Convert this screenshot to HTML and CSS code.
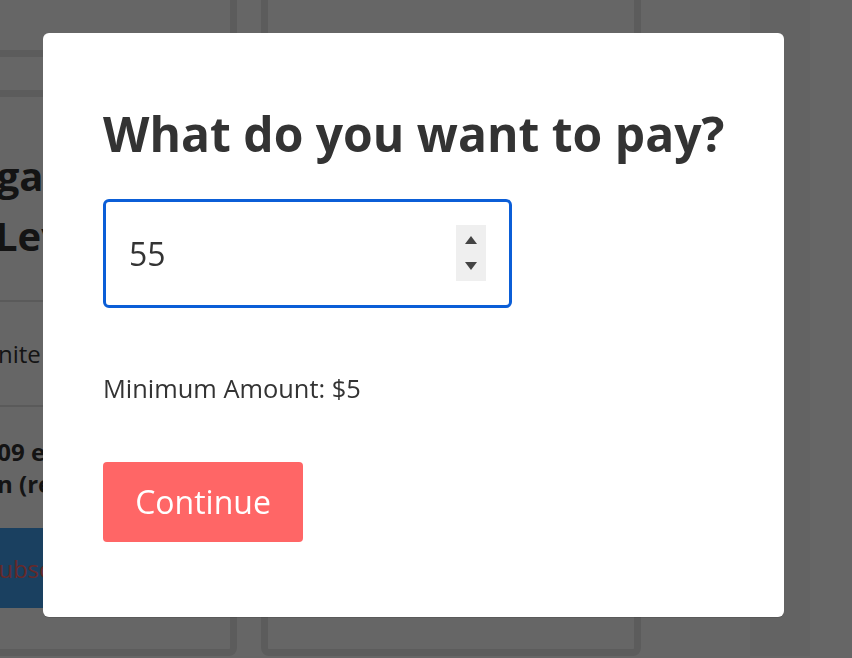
FILE: index.html
```html
<!DOCTYPE html>
<html lang="en">
<head>
<meta charset="utf-8">
<title>What do you want to pay?</title>
<link rel="stylesheet" href="styles.css">
</head>
<body>
<div class="page">
  <div class="card card-a">
    <div class="row row-top"></div>
    <div class="row row-mid"></div>
    <div class="plan">
      <h2 class="plan-name">Omega<br>Level</h2>
    </div>
    <div class="feature">Definite</div>
    <div class="price"><strong>$9.09 each<br>plan (renews)</strong></div>
    <div class="subscribe">Subscribe</div>
  </div>
  <div class="card card-b"></div>
  <div class="strip"></div>
</div>

<div class="overlay">
  <div class="modal">
    <h1 class="modal-title">What do you want to pay?</h1>
    <div class="amount">
      <span class="amount-value">55</span>
      <span class="spinner">
        <svg width="30" height="56" viewBox="0 0 30 56">
          <polygon points="9,19 15,11 21,19" fill="#444"/>
          <polygon points="9,37 21,37 15,45" fill="#444"/>
        </svg>
      </span>
    </div>
    <p class="minimum">Minimum Amount: $5</p>
    <button class="continue">Continue</button>
  </div>
</div>
</body>
</html>
```

FILE: styles.css
```css
html, body {
  margin: 0;
  padding: 0;
  width: 852px;
  height: 658px;
  overflow: hidden;
  background: #ffffff;
  font-family: "Open Sans", "Liberation Sans", sans-serif;
  color: #333333;
}

.page {
  display: flex;
  gap: 24px;
  margin-left: -143px;
  margin-top: -10px;
  height: 666px;
}

.card {
  box-sizing: border-box;
  width: 380px;
  height: 666px;
  border: 7px solid #e6e6e6;
  border-radius: 8px;
  background: #ffffff;
  flex: none;
}

.card-a {
  display: flex;
  flex-direction: column;
  overflow: hidden;
}

.row-top {
  height: 53px;
  border-bottom: 7px solid #e6e6e6;
  flex: none;
}

.row-mid {
  height: 33px;
  border-bottom: 7px solid #e6e6e6;
  flex: none;
}

.plan {
  height: 205px;
  border-bottom: 2px solid #e0e0e0;
  padding: 14px 0 0 131px;
  box-sizing: border-box;
  display: flex;
  align-items: center;
  flex: none;
}

.plan-name {
  margin: 0;
  font-size: 40px;
  line-height: 60px;
  font-weight: 700;
  text-indent: -93px;
  color: #333333;
}

.feature {
  height: 105px;
  border-bottom: 2px solid #e0e0e0;
  box-sizing: border-box;
  display: flex;
  align-items: center;
  padding-left: 89px;
  font-size: 24px;
  flex: none;
}

.price {
  height: 121px;
  box-sizing: border-box;
  display: flex;
  align-items: center;
  padding-left: 96px;
  font-size: 24px;
  line-height: 32px;
  text-indent: 3px;
  flex: none;
}

.subscribe {
  height: 80px;
  margin-right: -7px;
  background: #41a0f0;
  color: #ff6666;
  font-size: 24px;
  display: flex;
  align-items: center;
  padding-left: 121px;
  flex: none;
}

.strip {
  width: 60px;
  flex: none;
  margin-left: 85px;
  background: #f8f8f8;
}

.overlay {
  position: fixed;
  inset: 0;
  background: rgba(0, 0, 0, 0.6);
}

.modal {
  position: absolute;
  left: 43px;
  top: 33px;
  width: 741px;
  height: 584px;
  box-sizing: border-box;
  padding: 72px 20px 0 60px;
  background: #ffffff;
  border-radius: 6px;
  box-shadow: 0 1px 0 rgba(0, 0, 0, 0.12);
}

.modal-title {
  margin: 0;
  font-size: 48px;
  line-height: 1.2;
  font-weight: 700;
  white-space: nowrap;
  color: #333333;
}

.amount {
  margin-top: 36px;
  box-sizing: border-box;
  width: 409px;
  height: 109px;
  border: 3px solid #0b5ed7;
  border-radius: 6px;
  display: flex;
  align-items: center;
  justify-content: space-between;
  padding: 0 23px 0 23px;
}

.amount-value {
  font-size: 32px;
  color: #333333;
}

.spinner {
  display: block;
  width: 30px;
  height: 56px;
  background: #efefef;
}

.spinner svg {
  display: block;
}

.minimum {
  margin: 62px 0 0 0;
  font-size: 25.4px;
  line-height: 36px;
  color: #333333;
}

.continue {
  margin-top: 56px;
  width: 200px;
  height: 80px;
  border: none;
  border-radius: 4px;
  background: #ff6666;
  color: #ffffff;
  font-family: "Open Sans", "Liberation Sans", sans-serif;
  font-size: 32px;
  padding: 0;
}
```
